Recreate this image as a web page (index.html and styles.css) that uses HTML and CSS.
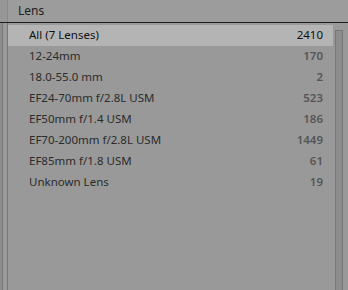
FILE: index.html
```html
<!DOCTYPE html>
<html>
<head>
<meta charset="utf-8">
<link rel="stylesheet" href="styles.css">
</head>
<body>
<div class="panel">
  <div class="header">
    <div class="header-gutter"></div>
    <div class="header-title">Lens</div>
  </div>
  <div class="body">
    <div class="gutter"></div>
    <div class="list">
      <div class="row selected"><span class="name">All (7 Lenses)</span><span class="count">2410</span></div>
      <div class="row"><span class="name">12-24mm</span><span class="count">170</span></div>
      <div class="row"><span class="name">18.0-55.0 mm</span><span class="count">2</span></div>
      <div class="row"><span class="name">EF24-70mm f/2.8L USM</span><span class="count">523</span></div>
      <div class="row"><span class="name">EF50mm f/1.4 USM</span><span class="count">186</span></div>
      <div class="row"><span class="name">EF70-200mm f/2.8L USM</span><span class="count">1449</span></div>
      <div class="row"><span class="name">EF85mm f/1.8 USM</span><span class="count">61</span></div>
      <div class="row"><span class="name">Unknown Lens</span><span class="count">19</span></div>
    </div>
    <div class="scrollbar"><div class="thumb"></div></div>
  </div>
</div>
</body>
</html>
```
FILE: styles.css
```css
html, body {
  margin: 0;
  padding: 0;
  height: 100%;
  background: #999999;
  font-family: "Noto Sans", "Open Sans", sans-serif;
  font-size: 11.5px;
}
.panel {
  display: flex;
  flex-direction: column;
  height: 290px;
}
.header {
  display: flex;
  height: 22px;
  background: #9c9c9c;
  border-bottom: 1px solid #1c1c1c;
  color: #1e1e1e;
}
.header-gutter {
  width: 7px;
  border-right: 1px solid #8a8a8a;
  background: #969696;
}
.header-title {
  padding-left: 10px;
  line-height: 22px;
  font-size: 12px;
}
.body {
  flex: 1;
  display: flex;
}
.gutter {
  width: 2px;
  background: #8d8d8d;
  border-right: 1px solid #777777;
  margin-right: 4px;
}
.list {
  flex: 1;
  padding-top: 2px;
  border-left: 1px solid #777777;
}
.row {
  display: flex;
  justify-content: space-between;
  height: 21px;
  line-height: 20px;
  padding: 0 10px 0 21px;
  color: #2b2b2b;
}
.row .count {
  color: #555555;
  font-weight: 600;
}
.row.selected {
  background: #b4b4b4;
  color: #111111;
}
.row.selected .count {
  color: #111111;
  font-weight: 400;
}
.scrollbar {
  width: 8px;
  margin: 0 5px 0 2px;
  padding-top: 7px;
}
.thumb {
  height: 100%;
  box-sizing: border-box;
  border: 1px solid #777777;
  border-bottom: none;
  background: #8c8c8c;
}
```
